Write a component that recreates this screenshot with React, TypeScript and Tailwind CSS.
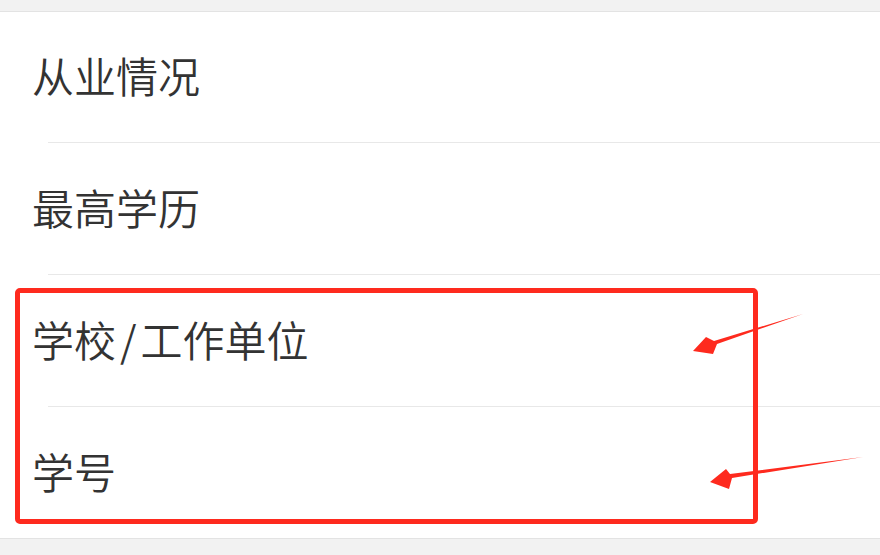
const rows = [["从业情况"], ["最高学历"], ["学校", "工作单位"], ["学号"]];

export default function App() {
  return (
    <div
      className="relative w-[880px] h-[555px] overflow-hidden bg-[#f2f2f2]"
      style={{ fontFamily: '"Noto Sans CJK SC", "Noto Sans", sans-serif' }}
    >
      <div className="h-[11px]" />
      <div className="bg-white border-t border-b border-[#e3e3e3]">
        {rows.map((parts, i) => (
          <div key={i}>
            <div
              className={
                "pl-[32px] pb-[4px] flex items-center " + (i === 0 ? "h-[130px]" : "h-[131px]")
              }
            >
              <span className="text-[42px] leading-none font-[350] text-[#333333]">
                {parts[0]}
                {parts.length > 1 && <span className="mx-[4px]">/</span>}
                {parts[1]}
              </span>
            </div>
            {i < rows.length - 1 && <div className="ml-[48px] h-px bg-[#e8e8e8]" />}
          </div>
        ))}
      </div>

      {/* red annotation */}
      <div className="absolute left-[15px] top-[288px] w-[743px] h-[236px] border-[5px] border-[#fe2a1e] rounded-[5px]" />
      <svg className="absolute left-0 top-0" width="880" height="555" viewBox="0 0 880 555">
        <path
          d="M803 314 L717 344 L713 354 L693 351 L706 337 L714 341 Z"
          fill="#fe2a1e"
        />
        <path
          d="M863 457 L732 478 L729 489 L710 482 L726 469 L730 474 Z"
          fill="#fe2a1e"
        />
      </svg>
    </div>
  );
}
